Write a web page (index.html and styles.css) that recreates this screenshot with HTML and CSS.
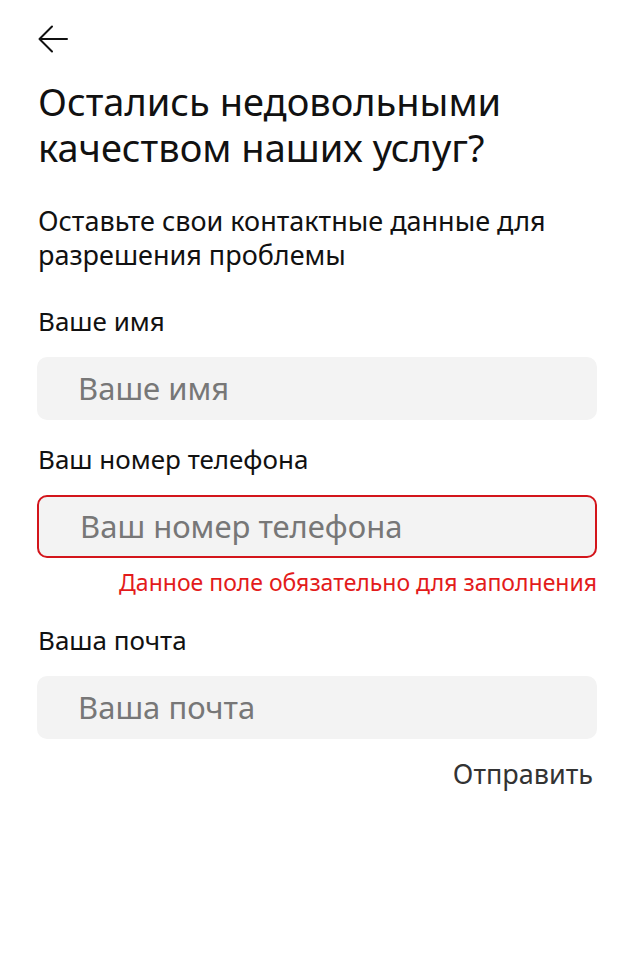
FILE: index.html
```html
<!DOCTYPE html>
<html lang="ru">
<head>
<meta charset="utf-8">
<title>Обратная связь</title>
<link rel="stylesheet" href="styles.css">
</head>
<body>
<div class="page">
  <button class="back" type="button" aria-label="Назад">
    <svg width="30" height="28" viewBox="0 0 30 28" fill="none" stroke="#111" stroke-width="2" stroke-linecap="round" stroke-linejoin="round"><path d="M29 14H1.5M14 1.5L1.5 14L14 26.5"/></svg>
  </button>
  <h1 class="title">Остались недовольными качеством наших услуг?</h1>
  <p class="lead">Оставьте свои контактные данные для разрешения проблемы</p>
  <form class="form">
    <div class="field">
      <label class="label">Ваше имя</label>
      <div class="input">Ваше имя</div>
    </div>
    <div class="field">
      <label class="label">Ваш номер телефона</label>
      <div class="input input-error">Ваш номер телефона</div>
      <div class="error">Данное поле обязательно для заполнения</div>
    </div>
    <div class="field field-last">
      <label class="label">Ваша почта</label>
      <div class="input">Ваша почта</div>
    </div>
    <div class="actions"><span class="submit">Отправить</span></div>
  </form>
</div>
</body>
</html>
```
FILE: styles.css
```css
* { box-sizing: border-box; }
html, body { margin: 0; padding: 0; background: #fff; }
body { font-family: "Noto Sans", "DejaVu Sans", sans-serif; color: #111; }
.page { padding: 25px 39px 0 38px; }
.back { display: block; padding: 0; margin: 0; border: 0; background: none; width: 30px; height: 28px; }
.back svg { display: block; }
.title { margin: 25px 0 0; font-size: 38px; font-weight: 400; line-height: 46px; }
.lead { margin: 34px 0 0; font-size: 27px; line-height: 34px; }
.form { margin-top: 32px; display: flex; flex-direction: column; }
.field { display: flex; flex-direction: column; }
.field + .field { margin-top: 22px; }
.field-last { margin-top: 27px !important; }
.label { font-size: 26px; line-height: 34px; }
.input { margin: 19px 0 0 -1px; height: 63px; border-radius: 10px; background: #f3f3f3; color: #777; font-size: 31px; line-height: 63px; padding-left: 41px; }
.input-error { border: 2px solid #d3151b; line-height: 59px; }
.error { margin-top: 10px; text-align: right; color: #e31b1b; font-size: 23px; line-height: 28px; }
.actions { display: flex; justify-content: flex-end; padding-right: 4px; margin-top: 18px; }
.submit { font-size: 27px; line-height: 34px; color: #333; }
```
